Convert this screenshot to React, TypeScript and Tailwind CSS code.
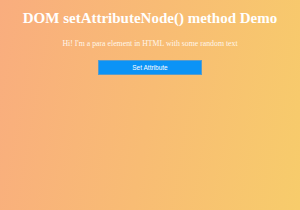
import React from "react";

function App() {
  return (
    <div className="w-[300px] h-[210px] bg-[linear-gradient(100deg,#f9ad7e_0%,#f8bc74_50%,#f7cc6b_100%)] flex flex-col items-center font-['Liberation_Serif',serif] text-white">
      <h1 className="mt-[9px] text-[15px] leading-[18px] font-bold">
        DOM setAttributeNode() method Demo
      </h1>
      <p className="mt-[12px] text-[7.8px] leading-[10px] text-[#fff6ea]">
        Hi! I'm a para element in HTML with some random text
      </p>
      <button className="mt-[11px] w-[104px] h-[15px] bg-[#0b93f6] border border-[#5a9bc8] text-[6.5px] font-['Liberation_Sans',sans-serif] text-white">
        Set Attribute
      </button>
    </div>
  );
}

export default App;
